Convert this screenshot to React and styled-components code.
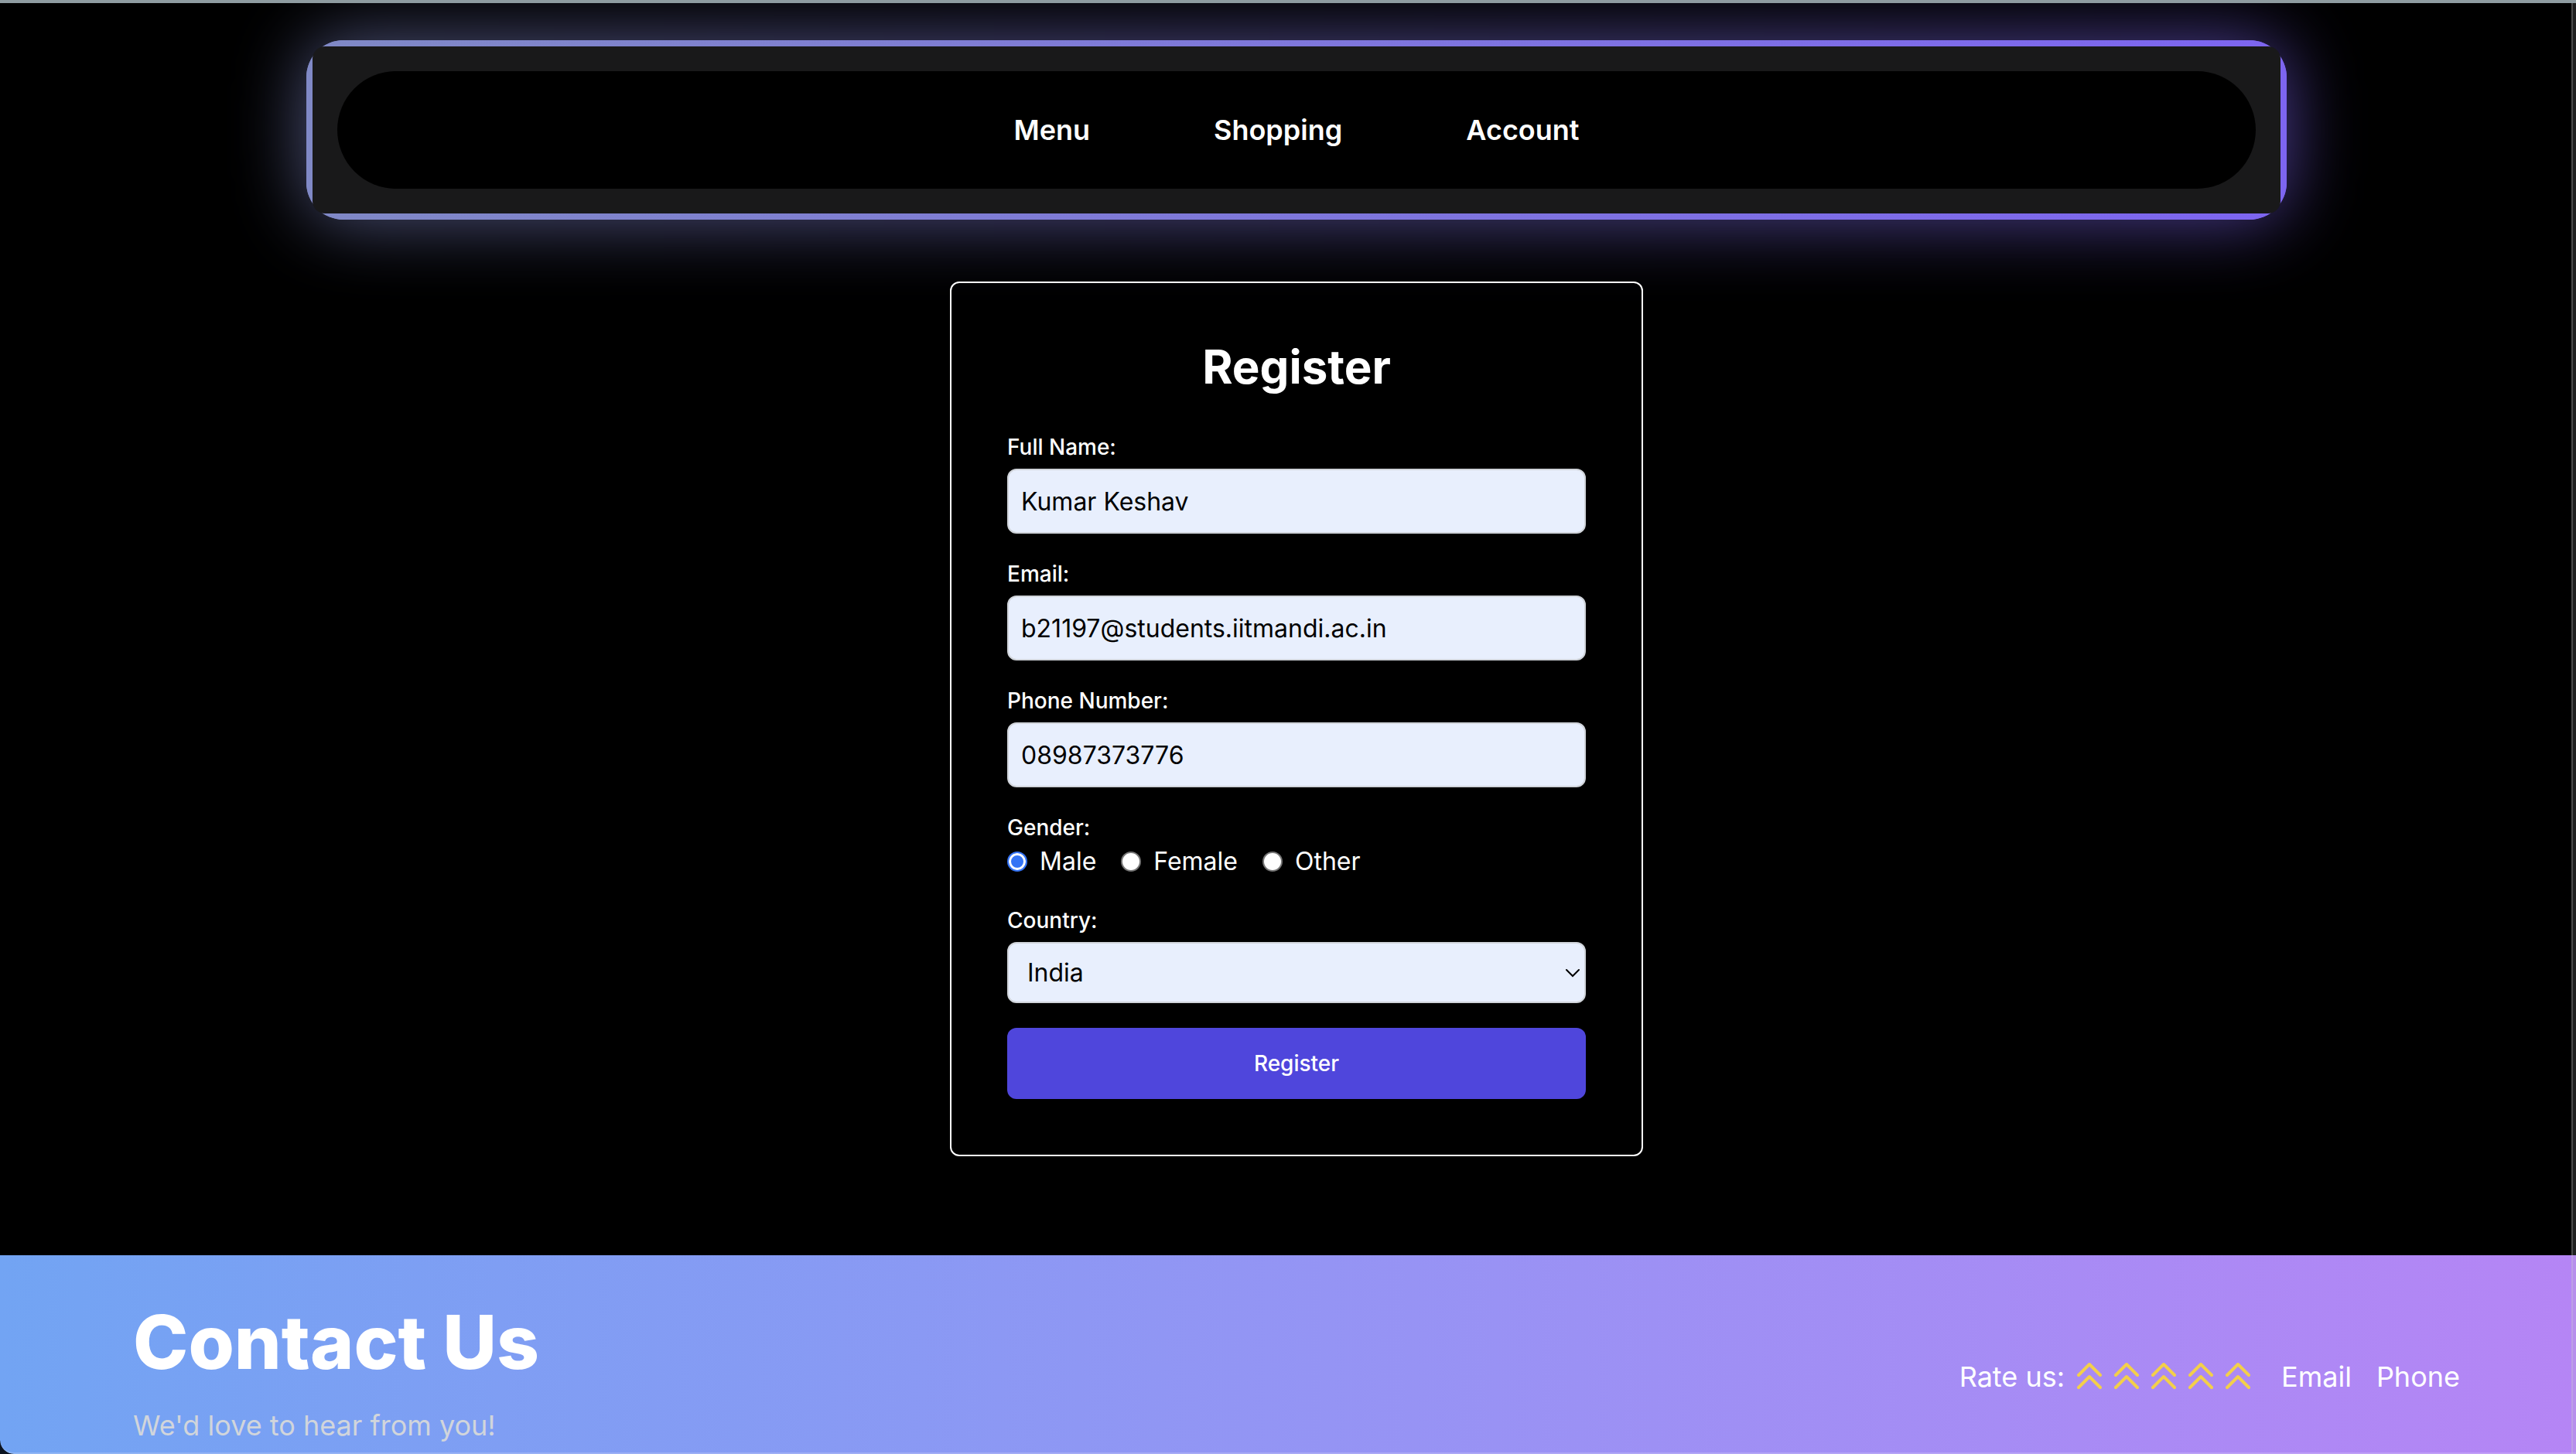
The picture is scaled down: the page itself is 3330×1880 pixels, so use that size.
import React, { useState } from "react";
import styled, { createGlobalStyle } from "styled-components";

const GlobalStyle = createGlobalStyle`
  *, *::before, *::after { box-sizing: border-box; }
  body {
    margin: 0;
    background: #0b1422;
    font-family: Inter, "Liberation Sans", sans-serif;
    color: #fff;
  }
  h1, h2, p, fieldset, legend { margin: 0; padding: 0; border: 0; }
  input, select, button { font: inherit; margin: 0; }
`;

const Page = styled.div`
  position: relative;
  min-height: 100vh;
  display: flex;
  flex-direction: column;
  overflow: hidden;
  background: #000;
  border-top: 4px solid #8f9ca1;
  border-bottom-left-radius: 18px;
`;

const Content = styled.div`
  display: flex;
  flex-direction: column;
  align-items: center;
  gap: 80px;
  padding: 48px 0 128px 22px;
`;

const NavFrame = styled.header`
  position: relative;
  width: 100%;
  max-width: 2560px;
  padding: 8px;
  border-radius: 48px;
  background: linear-gradient(90deg, #8089c6, #7d65f0);

  &::before {
    content: "";
    position: absolute;
    inset: 0;
    border-radius: 48px;
    background: linear-gradient(90deg, #8089c6, #7d65f0);
    filter: blur(48px);
    opacity: 0.64;
  }

  &::after {
    content: "";
    position: absolute;
    inset: 0;
    border-radius: 48px;
    background: linear-gradient(90deg, #8089c6, #7d65f0);
  }
`;

const NavPanel = styled.div`
  position: relative;
  z-index: 1;
  padding: 32px;
  border-radius: 16px;
  background: #19191a;
`;

const Nav = styled.nav`
  display: flex;
  justify-content: center;
  gap: 160px;
  padding: 48px;
  border-radius: 999px;
  background: #000;
`;

const NavLink = styled.a`
  color: #fff;
  font-size: 36px;
  line-height: 56px;
  font-weight: 600;
  text-decoration: none;
`;

const Card = styled.form`
  position: relative;
  width: 100%;
  max-width: 896px;
  display: flex;
  flex-direction: column;
  gap: 32px;
  padding: 72px;
  border: 2px solid #fff;
  border-radius: 12px;
`;

const Title = styled.h1`
  margin-bottom: 16px;
  font-size: 60px;
  line-height: 72px;
  font-weight: 700;
  text-align: center;
`;

const Field = styled.div`
  display: flex;
  flex-direction: column;
  gap: 8px;
`;

const labelText = `
  display: block;
  font-size: 28px;
  line-height: 40px;
  font-weight: 500;
`;

const Label = styled.label`
  ${labelText}
`;

const Legend = styled.legend`
  ${labelText}
`;

const TextInput = styled.input`
  width: 100%;
  height: 84px;
  padding: 16px;
  border: 2px solid #d0d4da;
  border-radius: 12px;
  background: #e8effd;
  color: #000;
  font-size: 32px;
  line-height: 48px;
`;

const Radios = styled.div`
  display: flex;
  gap: 32px;
`;

const RadioLabel = styled.label`
  display: flex;
  align-items: center;
  gap: 16px;
  font-size: 32px;
  line-height: 48px;
`;

const Radio = styled.input`
  appearance: none;
  width: 26px;
  height: 26px;
  border: 2px solid #767676;
  border-radius: 50%;
  background: #fff;

  &:checked {
    border-color: #3574f5;
    background: #3574f5;
    box-shadow: inset 0 0 0 3px #fff;
  }
`;

const SelectWrap = styled.div`
  display: grid;
  align-items: center;

  & > * { grid-area: 1 / 1; }
`;

const Select = styled.select`
  appearance: none;
  width: 100%;
  height: 79px;
  padding: 0 24px;
  border: 2px solid #d0d4da;
  border-radius: 12px;
  background: #e8effd;
  color: #000;
  font-size: 32px;
`;

const SelectArrow = styled.svg`
  justify-self: end;
  width: 20px;
  height: 12px;
  margin-right: 7px;
  pointer-events: none;
`;

const Submit = styled.button`
  height: 92px;
  border: 0;
  border-radius: 12px;
  background: #4f46dc;
  color: #fff;
  font-size: 28px;
  line-height: 40px;
  font-weight: 500;
`;

const Footer = styled.footer`
  flex: 1;
  display: flex;
  justify-content: space-between;
  align-items: flex-start;
  padding: 64px 150px 6px 172px;
  border-bottom: 2px solid rgba(255, 255, 255, 0.2);
  border-bottom-left-radius: 18px;
  background: linear-gradient(90deg, #72a4f3, #b585f5) border-box;
`;

const FooterTitle = styled.h2`
  margin-bottom: 32px;
  font-size: 96px;
  line-height: 96px;
  font-weight: 800;
`;

const FooterNote = styled.p`
  color: #d1d5db;
  font-size: 36px;
  line-height: 56px;
`;

const FooterSide = styled.div`
  align-self: center;
  display: flex;
  align-items: center;
  gap: 32px;
  font-size: 36px;
  line-height: 56px;
`;

const Rating = styled.div`
  display: flex;
  align-items: center;
`;

const RatingText = styled.span`
  margin-right: 8px;
`;

const RateButton = styled.button`
  display: block;
  padding: 0;
  border: 0;
  background: none;
  color: #f3cf4a;
`;

const RateIcon = styled.svg`
  display: block;
  width: 48px;
  height: 48px;
`;

const FooterLink = styled.a`
  color: #fff;
  text-decoration: none;
`;

const ScrollTrack = styled.div`
  position: absolute;
  top: 0;
  right: 0;
  bottom: 0;
  width: 6px;
  border-left: 2px solid rgba(205, 205, 205, 0.36);
  background: rgba(190, 190, 190, 0.16) padding-box;
`;

const fields = [
  { id: "name", label: "Full Name:", type: "text", value: "Kumar Keshav" },
  { id: "email", label: "Email:", type: "email", value: "b21197@students.iitmandi.ac.in" },
  { id: "phone", label: "Phone Number:", type: "tel", value: "08987373776" },
];

const genders = ["Male", "Female", "Other"];

export default function App() {
  const [gender, setGender] = useState("Male");

  return (
    <>
      <GlobalStyle />
      <Page>
        <Content>
          <NavFrame>
            <NavPanel>
              <Nav>
                {["Menu", "Shopping", "Account"].map((item) => (
                  <NavLink key={item} href="#">{item}</NavLink>
                ))}
              </Nav>
            </NavPanel>
          </NavFrame>

          <Card onSubmit={(e) => e.preventDefault()}>
            <Title>Register</Title>
            {fields.map((f) => (
              <Field key={f.id}>
                <Label htmlFor={f.id}>{f.label}</Label>
                <TextInput id={f.id} name={f.id} type={f.type} defaultValue={f.value} />
              </Field>
            ))}
            <fieldset>
              <Legend>Gender:</Legend>
              <Radios>
                {genders.map((g) => (
                  <RadioLabel key={g}>
                    <Radio
                      type="radio"
                      name="gender"
                      value={g}
                      checked={gender === g}
                      onChange={() => setGender(g)}
                    />
                    {g}
                  </RadioLabel>
                ))}
              </Radios>
            </fieldset>
            <Field>
              <Label htmlFor="country">Country:</Label>
              <SelectWrap>
                <Select id="country" name="country" defaultValue="India">
                  <option>India</option>
                </Select>
                <SelectArrow viewBox="0 0 20 12" fill="none" stroke="#000" strokeWidth="2" aria-hidden="true">
                  <path d="M2 2l8 8 8-8" strokeLinecap="round" />
                </SelectArrow>
              </SelectWrap>
            </Field>
            <Submit type="submit">Register</Submit>
          </Card>
        </Content>

        <Footer>
          <div>
            <FooterTitle>Contact Us</FooterTitle>
            <FooterNote>We'd love to hear from you!</FooterNote>
          </div>
          <FooterSide>
            <Rating>
              <RatingText>Rate us:</RatingText>
              {[1, 2, 3, 4, 5].map((n) => (
                <RateButton key={n} type="button" aria-label={`Rate ${n}`}>
                  <RateIcon viewBox="0 0 24 24" fill="none" stroke="currentColor" strokeWidth="2" strokeLinecap="round" strokeLinejoin="round">
                    <path d="M5 11l7-7 7 7M5 19l7-7 7 7" />
                  </RateIcon>
                </RateButton>
              ))}
            </Rating>
            <FooterLink href="#">Email</FooterLink>
            <FooterLink href="#">Phone</FooterLink>
          </FooterSide>
        </Footer>
        <ScrollTrack />
      </Page>
    </>
  );
}
